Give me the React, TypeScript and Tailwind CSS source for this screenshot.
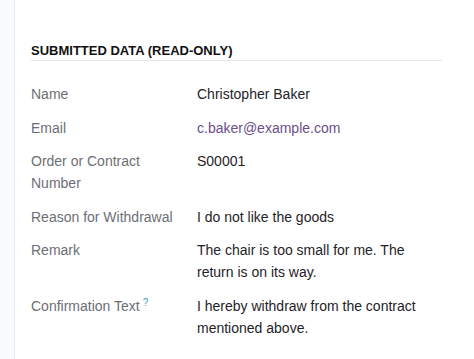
import React from 'react';

const ROWS: { label: string; value: string; link?: boolean; help?: boolean }[] = [
    { label: 'Name', value: 'Christopher Baker' },
    { label: 'Email', value: 'c.baker@example.com', link: true },
    { label: 'Order or Contract Number', value: 'S00001' },
    { label: 'Reason for Withdrawal', value: 'I do not like the goods' },
    { label: 'Remark', value: 'The chair is too small for me. The return is on its way.' },
    { label: 'Confirmation Text', value: 'I hereby withdraw from the contract mentioned above.', help: true },
];

export default function App() {
    return (
        <div className="flex h-[359px] w-[474px] bg-white font-['Liberation_Sans',Arial,sans-serif] text-[14px]">
            <div className="w-[15px] shrink-0 border-r border-[#e7e9ed] bg-[#f9fafb]" />
            <div className="flex-1 pl-[16px] pr-[32px] pt-[43px]">
                <h2 className="border-b border-[#e5e5e5] pb-[1px] text-[13px] font-bold uppercase leading-[16px] text-[#111111]">
                    Submitted Data (Read-only)
                </h2>
                <div className="mt-[22px] flex flex-col gap-[11.6px]">
                    {ROWS.map((row) => (
                        <div key={row.label} className="flex leading-[22px]">
                            <div className="w-[166px] shrink-0 pr-[16px] text-[#6b6f75]">
                                {row.label}
                                {row.help && (
                                    <sup className="ml-[3px] text-[10px] text-[#3aa0c8]">?</sup>
                                )}
                            </div>
                            <div className={`flex-1 ${row.link ? 'text-[#6a4f8a]' : 'text-[#1f2328]'}`}>
                                {row.value}
                            </div>
                        </div>
                    ))}
                </div>
            </div>
        </div>
    );
}
